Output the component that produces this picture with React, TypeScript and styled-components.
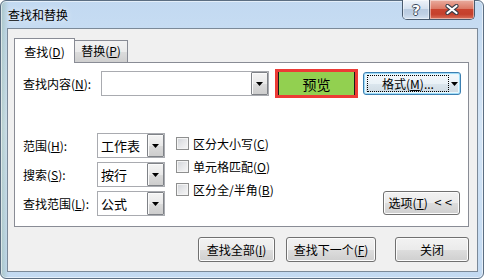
import React from 'react';
import styled, { createGlobalStyle } from 'styled-components';

const GlobalStyle = createGlobalStyle`
  html, body { margin: 0; padding: 0; background: #ffffff; }
  body {
    font-family: "Noto Sans CJK SC", "Microsoft YaHei", "Liberation Sans", sans-serif;
    font-size: 12px;
    color: #000;
  }
  * { box-sizing: border-box; }
`;

const Window = styled.div`
  width: 484px;
  height: 279px;
  border: 1px solid #5b6e82;
  border-radius: 6px;
  padding: 0 5px 6px 6px;
  display: flex;
  flex-direction: column;
  background:
    linear-gradient(90deg, rgba(120, 160, 120, 0.35) 0px, rgba(120, 160, 120, 0) 8px),
    linear-gradient(180deg, #c2d9f1 0%, #d4e5f6 45%, #c3daf2 100%);
  box-shadow: inset 0 0 0 1px rgba(255, 255, 255, 0.55);
`;

const TitleBar = styled.div`
  height: 27px;
  flex: none;
  display: flex;
  align-items: flex-start;
  justify-content: space-between;
  padding: 0 3px 0 1px;
`;

const Title = styled.div`
  margin-top: 6px;
  line-height: 16px;
  font-size: 12px;
  color: #000;
  text-shadow: 0 0 6px rgba(255, 255, 255, 0.9);
`;

const CaptionGroup = styled.div`
  display: flex;
  height: 20px;
  margin-top: -1px;
  border: 1px solid #4a5b6e;
  border-top: none;
  border-radius: 0 0 5px 5px;
  overflow: hidden;
`;

const CaptionButton = styled.div<{ $close?: boolean }>`
  width: ${(p) => (p.$close ? 44 : 27)}px;
  display: flex;
  align-items: center;
  justify-content: center;
  border-right: ${(p) => (p.$close ? 'none' : '1px solid #4a5b6e')};
  background: ${(p) =>
    p.$close
      ? 'linear-gradient(180deg, #e9ad9f 0%, #dc7a66 45%, #c9442f 50%, #c4402c 75%, #d9725c 100%)'
      : 'linear-gradient(180deg, #eef3fa 0%, #d5e1ef 45%, #b9cbe0 50%, #bfd0e4 75%, #d6e3f1 100%)'};
  box-shadow: inset 0 0 0 1px rgba(255, 255, 255, 0.45);
  color: #fff;
  font-family: "DejaVu Sans", sans-serif;
  font-weight: bold;
  font-size: 14px;
  line-height: 14px;
  text-shadow: 1px 0 0 #3b4a5c, -1px 0 0 #3b4a5c, 0 1px 0 #3b4a5c, 0 -1px 0 #3b4a5c;
`;

const Client = styled.div`
  flex: 1;
  display: flex;
  flex-direction: column;
  background: #f0f0f0;
  border: 1px solid #7b8998;
  padding: 9px 8px 9px 6px;
`;

const TabRow = styled.div`
  display: flex;
  align-items: flex-end;
  height: 25px;
  margin-bottom: -1px;
  position: relative;
  z-index: 1;
`;

const Tab = styled.div<{ $active?: boolean; $w: number }>`
  width: ${(p) => p.$w}px;
  height: ${(p) => (p.$active ? 25 : 23)}px;
  border: 1px solid #898c95;
  border-bottom: ${(p) => (p.$active ? 'none' : '1px solid #898c95')};
  margin-left: ${(p) => (p.$active ? 0 : -1)}px;
  background: ${(p) =>
    p.$active ? '#ffffff' : 'linear-gradient(180deg, #f2f2f2 0%, #ebebeb 50%, #dddddd 50%, #cfcfcf 100%)'};
  display: flex;
  justify-content: center;
  padding-top: ${(p) => (p.$active ? 5 : 2)}px;
  line-height: 16px;
  position: relative;
  z-index: ${(p) => (p.$active ? 2 : 1)};
`;

const Key = styled.span`
  text-decoration: underline;
  text-underline-offset: 1px;
`;

const Panel = styled.div`
  height: 165px;
  flex: none;
  background: #ffffff;
  border: 1px solid #898c95;
  padding: 6px 7px 0 8px;
  display: flex;
  flex-direction: column;
`;

const SearchRow = styled.div`
  display: flex;
  align-items: center;
  height: 29px;
`;

const FieldLabel = styled.div<{ $w: number }>`
  width: ${(p) => p.$w}px;
  flex: none;
  line-height: 16px;
  white-space: nowrap;
`;

const ComboBox = styled.div<{ $w: number }>`
  width: ${(p) => p.$w}px;
  height: 25px;
  flex: none;
  border: 1px solid #a9abb0;
  background: #fff;
  display: flex;
  align-items: stretch;
`;

const ComboValue = styled.div`
  flex: 1;
  padding-left: 3px;
  display: flex;
  align-items: center;
  line-height: 16px;
  font-size: 13px;
`;

const DropButton = styled.div`
  width: 17px;
  flex: none;
  border: 1px solid #7f8287;
  border-radius: 1px;
  background: linear-gradient(180deg, #f4f4f4 0%, #e9e9e9 50%, #dadada 55%, #cdcdcd 100%);
  box-shadow: inset 1px 1px 0 #fbfbfb;
  display: flex;
  align-items: center;
  justify-content: center;
`;

const Arrow = () => (
  <svg width="7" height="4" viewBox="0 0 7 4">
    <polygon points="0,0 7,0 3.5,4" fill="#000" />
  </svg>
);

const PreviewButton = styled.div`
  width: 83px;
  height: 29px;
  margin-left: 6px;
  flex: none;
  border: 3px solid #ec3b36;
  background: #92d050;
  box-shadow: inset 1px 0 0 #1a1a1a, inset -1px 0 0 #1a1a1a;
  display: flex;
  align-items: center;
  justify-content: center;
  font-size: 14px;
  line-height: 16px;
`;

const FormatButton = styled.div`
  width: 98px;
  height: 23px;
  margin-left: 5px;
  flex: none;
  border: 1px solid #3c7fb1;
  border-radius: 3px;
  background: linear-gradient(180deg, #f4f8fb 0%, #eaf2f7 50%, #dbe6ee 52%, #ced9e1 100%);
  box-shadow: inset 0 0 0 1px #9fdcf8, inset 0 0 0 2px #e9f7fd;
  display: flex;
  align-items: stretch;
  padding: 2px 1px 2px 3px;
`;

const FocusRect = styled.div`
  flex: 1;
  border: 1px dotted #000;
  display: flex;
  align-items: center;
  justify-content: center;
  line-height: 14px;
`;

const SplitArrow = styled.div`
  width: 10px;
  flex: none;
  display: flex;
  align-items: center;
  justify-content: center;
`;

const Lower = styled.div`
  display: flex;
  align-items: flex-start;
  margin-top: 35px;
`;

const ComboGrid = styled.div`
  display: grid;
  grid-template-columns: 74px 68px;
  grid-auto-rows: 25px;
  row-gap: 4px;
  align-items: center;
`;

const CheckList = styled.div`
  display: flex;
  flex-direction: column;
  gap: 6px;
  margin-left: 11px;
  margin-top: 2px;
`;

const CheckRow = styled.div`
  height: 17px;
  display: flex;
  align-items: center;
  gap: 4px;
  line-height: 16px;
  white-space: nowrap;
`;

const CheckBox = styled.div`
  width: 13px;
  height: 13px;
  border: 1px solid #8e8f8f;
  background: linear-gradient(135deg, #d0d3d8 0%, #e6e7e9 50%, #f7f7f7 100%);
  box-shadow: inset 0 0 0 1px #f4f4f4;
`;

const PushButton = styled.div<{ $w: number }>`
  width: ${(p) => p.$w}px;
  height: 25px;
  flex: none;
  border: 1px solid #707070;
  border-radius: 3px;
  background: linear-gradient(180deg, #f2f2f2 0%, #ebebeb 50%, #dddddd 52%, #cfcfcf 100%);
  box-shadow: inset 0 0 0 1px #fcfcfc;
  display: flex;
  align-items: center;
  justify-content: center;
  line-height: 16px;
  white-space: nowrap;
`;

const OptionsButton = styled(PushButton)`
  height: 24px;
  margin-left: auto;
  margin-right: 1px;
  margin-top: 58px;
`;

const Chevrons = styled.span`
  margin-left: 6px;
  letter-spacing: 2px;
  font-family: "DejaVu Sans", sans-serif;
  font-size: 10px;
`;

const BottomRow = styled.div`
  display: flex;
  justify-content: flex-end;
  margin-top: 10px;
`;

const Spacer = styled.div<{ $w: number }>`
  width: ${(p) => p.$w}px;
  flex: none;
`;

const CloseIcon = () => (
  <svg width="14" height="11" viewBox="0 0 14 11">
    <path d="M2.5 2 L11.5 9 M11.5 2 L2.5 9" stroke="#3b3f4a" strokeWidth="4.2" strokeLinecap="round" />
    <path d="M2.5 2 L11.5 9 M11.5 2 L2.5 9" stroke="#ffffff" strokeWidth="2.2" strokeLinecap="round" />
  </svg>
);

const Select = ({ value }: { value: string }) => (
  <ComboBox $w={68}>
    <ComboValue>{value}</ComboValue>
    <DropButton>
      <Arrow />
    </DropButton>
  </ComboBox>
);

export default function App() {
  return (
    <>
      <GlobalStyle />
      <Window>
        <TitleBar>
          <Title>查找和替换</Title>
          <CaptionGroup>
            <CaptionButton>?</CaptionButton>
            <CaptionButton $close>
              <CloseIcon />
            </CaptionButton>
          </CaptionGroup>
        </TitleBar>
        <Client>
          <TabRow>
            <Tab $active $w={61}>
              查找(<Key>D</Key>)
            </Tab>
            <Tab $w={54}>
              替换(<Key>P</Key>)
            </Tab>
          </TabRow>
          <Panel>
            <SearchRow>
              <FieldLabel $w={78}>
                查找内容(<Key>N</Key>):
              </FieldLabel>
              <ComboBox $w={168}>
                <ComboValue />
                <DropButton>
                  <Arrow />
                </DropButton>
              </ComboBox>
              <PreviewButton>预览</PreviewButton>
              <FormatButton>
                <FocusRect>
                  格式(<Key>M</Key>)...
                </FocusRect>
                <SplitArrow>
                  <Arrow />
                </SplitArrow>
              </FormatButton>
            </SearchRow>
            <Lower>
              <ComboGrid>
                <FieldLabel $w={74}>
                  范围(<Key>H</Key>):
                </FieldLabel>
                <Select value="工作表" />
                <FieldLabel $w={74}>
                  搜索(<Key>S</Key>):
                </FieldLabel>
                <Select value="按行" />
                <FieldLabel $w={74}>
                  查找范围(<Key>L</Key>):
                </FieldLabel>
                <Select value="公式" />
              </ComboGrid>
              <CheckList>
                <CheckRow>
                  <CheckBox />
                  <span>
                    区分大小写(<Key>C</Key>)
                  </span>
                </CheckRow>
                <CheckRow>
                  <CheckBox />
                  <span>
                    单元格匹配(<Key>O</Key>)
                  </span>
                </CheckRow>
                <CheckRow>
                  <CheckBox />
                  <span>
                    区分全/半角(<Key>B</Key>)
                  </span>
                </CheckRow>
              </CheckList>
              <OptionsButton $w={77}>
                选项(<Key>T</Key>)<Chevrons>&lt;&lt;</Chevrons>
              </OptionsButton>
            </Lower>
          </Panel>
          <BottomRow>
            <PushButton $w={77}>
              查找全部(<Key>I</Key>)
            </PushButton>
            <Spacer $w={11} />
            <PushButton $w={90}>
              查找下一个(<Key>F</Key>)
            </PushButton>
            <Spacer $w={19} />
            <PushButton $w={74}>关闭</PushButton>
          </BottomRow>
        </Client>
      </Window>
    </>
  );
}
